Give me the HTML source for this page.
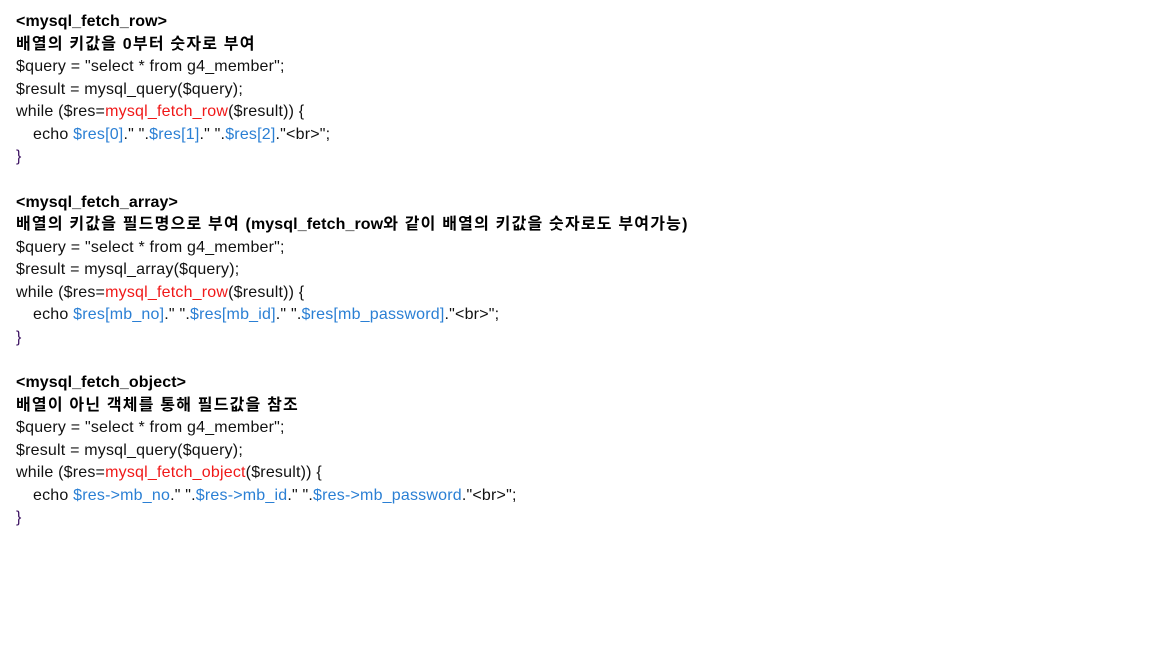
<!DOCTYPE html>
<html><head><meta charset="utf-8"><style>
body{margin:0;background:#fff;}
.c{position:absolute;left:16px;top:11px;font-family:"Liberation Sans","Noto Sans CJK KR",sans-serif;font-size:16px;line-height:22.56px;color:#111;white-space:pre;letter-spacing:0.2px}
b{font-weight:bold;color:#000;letter-spacing:0.1px}
.k{letter-spacing:1.2px}
.i{display:inline-block;width:17px}
.r{color:#f01818}.u{color:#2a7fd4}.p{color:#3a1060}
</style></head><body><div class="c"><b>&lt;mysql_fetch_row&gt;</b>
<b class="k">배열의 키값을 0부터 숫자로 부여</b>
$query = "select * from g4_member";
$result = mysql_query($query);
while ($res=<span class="r">mysql_fetch_row</span>($result)) {
<span class="i"></span>echo <span class="u">$res[0]</span>." ".<span class="u">$res[1]</span>." ".<span class="u">$res[2]</span>."&lt;br&gt;";
<span class="p">}</span>

<b>&lt;mysql_fetch_array&gt;</b>
<b><span class="k">배열의 키값을 필드명으로 부여 </span>(mysql_fetch_row<span class="k">와 같이 배열의 키값을 숫자로도 부여가능</span>)</b>
$query = "select * from g4_member";
$result = mysql_array($query);
while ($res=<span class="r">mysql_fetch_row</span>($result)) {
<span class="i"></span>echo <span class="u">$res[mb_no]</span>." ".<span class="u">$res[mb_id]</span>." ".<span class="u">$res[mb_password]</span>."&lt;br&gt;";
<span class="p">}</span>

<b>&lt;mysql_fetch_object&gt;</b>
<b class="k">배열이 아닌 객체를 통해 필드값을 참조</b>
$query = "select * from g4_member";
$result = mysql_query($query);
while ($res=<span class="r">mysql_fetch_object</span>($result)) {
<span class="i"></span>echo <span class="u">$res-&gt;mb_no</span>." ".<span class="u">$res-&gt;mb_id</span>." ".<span class="u">$res-&gt;mb_password</span>."&lt;br&gt;";
<span class="p">}</span></div></body></html>
